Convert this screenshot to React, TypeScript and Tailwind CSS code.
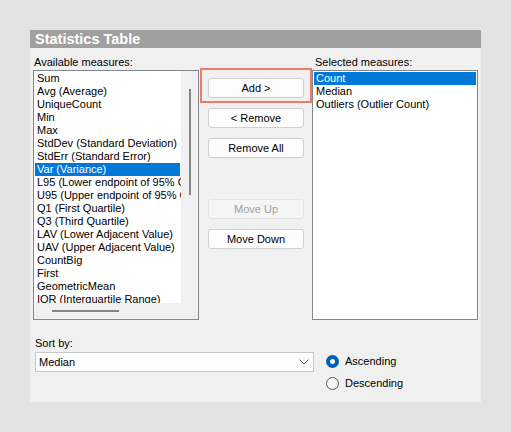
import { useState } from 'react';

const AVAILABLE = [
  'Sum',
  'Avg (Average)',
  'UniqueCount',
  'Min',
  'Max',
  'StdDev (Standard Deviation)',
  'StdErr (Standard Error)',
  'Var (Variance)',
  'L95 (Lower endpoint of 95% Confidence Interval)',
  'U95 (Upper endpoint of 95% Confidence Interval)',
  'Q1 (First Quartile)',
  'Q3 (Third Quartile)',
  'LAV (Lower Adjacent Value)',
  'UAV (Upper Adjacent Value)',
  'CountBig',
  'First',
  'GeometricMean',
  'IQR (Interquartile Range)',
];

const SELECTED = ['Count', 'Median', 'Outliers (Outlier Count)'];

function ListRow({ label, active }: { label: string; active: boolean }) {
  return (
    <div
      className={
        'h-[13px] leading-[13px] pl-[2px] whitespace-nowrap ' +
        (active ? 'bg-[#0078d7] text-white' : 'text-black')
      }
    >
      {label}
    </div>
  );
}

function Button({ label, disabled }: { label: string; disabled?: boolean }) {
  return (
    <button
      className={
        'w-[96px] h-[20px] rounded-[3px] border text-[11px] leading-[18px] ' +
        (disabled
          ? 'bg-[#f5f5f5] border-[#e3e3e3] text-[#a0a0a0]'
          : 'bg-[#fdfdfd] border-[#d0d0d0] text-black')
      }
    >
      {label}
    </button>
  );
}

export default function App() {
  const [sortOrder, setSortOrder] = useState<'asc' | 'desc'>('asc');

  return (
    <div
      className="w-[511px] h-[432px] bg-[#e3e3e3] pt-[30px] pl-[30px]"
      style={{ fontFamily: '"Liberation Sans", Arial, sans-serif' }}
    >
      <div className="w-[451px] h-[372px] bg-[#f0f0f0] text-[11px] text-black">
        {/* title bar */}
        <div className="h-[18px] bg-[#a0a0a0] pl-[5px] text-white font-bold text-[14.5px] leading-[18px]">
          Statistics Table
        </div>

        <div className="flex pl-[3px] pt-[7px]">
          {/* available list */}
          <div className="w-[166px] flex flex-col">
            <div className="h-[14px] leading-[14px] pl-[1px] mb-[1px]">Available measures:</div>
            <div className="h-[250px] border border-[#828790] bg-[#f0f0f0] grid grid-cols-[147px_17px] grid-rows-[232px_16px]">
              <div className="bg-white pt-[1px] px-[1px] overflow-hidden">
                {AVAILABLE.map((m) => (
                  <ListRow key={m} label={m} active={m === 'Var (Variance)'} />
                ))}
              </div>
              <div className="flex justify-center pt-[18px]">
                <div className="w-[2px] h-[106px] bg-[#858585]" />
              </div>
              <div className="pl-[18px] pt-[7px]">
                <div className="w-[67px] h-[2px] bg-[#858585]" />
              </div>
              <div />
            </div>
          </div>

          {/* buttons column */}
          <div className="w-[113px] flex flex-col items-start pl-[1px] pt-[13px]">
            <div className="border-2 border-[#f07a68] px-[6px] pt-[8px] pb-[3px]">
              <Button label="Add >" />
            </div>
            <div className="pl-[8px] flex flex-col gap-[10px] mt-[5px]">
              <Button label="< Remove" />
              <Button label="Remove All" />
              <div className="h-[21px]" />
              <Button label="Move Up" disabled />
              <Button label="Move Down" />
            </div>
          </div>

          {/* selected list */}
          <div className="w-[166px] flex flex-col">
            <div className="h-[14px] leading-[14px] pl-[3px] mb-[1px]">Selected measures:</div>
            <div className="h-[250px] border border-[#828790] bg-white pt-[1px] px-[1px]">
              {SELECTED.map((m) => (
                <ListRow key={m} label={m} active={m === 'Count'} />
              ))}
            </div>
          </div>
        </div>

        {/* sort by */}
        <div className="flex pl-[5px] mt-[16px]">
          <div className="w-[279px] flex flex-col">
            <div className="h-[14px] leading-[14px] mb-[2px]">Sort by:</div>
            <div className="h-[20px] bg-[#fdfdfd] border border-[#c9c9c9] flex items-center justify-between pl-[3px] pr-[4px]">
              <span>Median</span>
              <svg width="10" height="6" viewBox="0 0 10 6" fill="none" stroke="#606060" strokeWidth="1">
                <polyline points="0.5,0.5 5,5 9.5,0.5" />
              </svg>
            </div>
          </div>

          <div className="flex flex-col gap-[9px] pl-[12px] pt-[19px]">
            {(['asc', 'desc'] as const).map((k) => {
              const on = sortOrder === k;
              return (
                <label key={k} className="flex items-center gap-[6px] h-[13px] cursor-default" onClick={() => setSortOrder(k)}>
                  {on ? (
                    <span className="w-[13px] h-[13px] rounded-full bg-[#005fb8] flex items-center justify-center">
                      <span className="w-[5px] h-[5px] rounded-full bg-white" />
                    </span>
                  ) : (
                    <span className="w-[13px] h-[13px] rounded-full border border-[#5a5a5a] bg-[#f7f7f7]" />
                  )}
                  <span className="leading-[13px]">{k === 'asc' ? 'Ascending' : 'Descending'}</span>
                </label>
              );
            })}
          </div>
        </div>
      </div>
    </div>
  );
}
